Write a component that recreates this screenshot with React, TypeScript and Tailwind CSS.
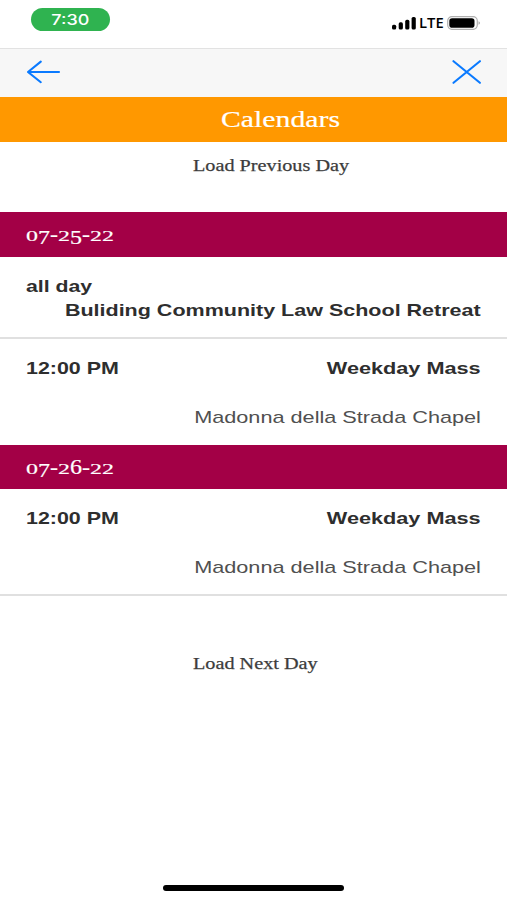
import { clsx } from "clsx";

type CalendarEvent = {
  time: string;
  title: string;
  location?: string;
};

const weekdayMass: CalendarEvent = {
  time: "12:00 PM",
  title: "Weekday Mass",
  location: "Madonna della Strada Chapel",
};

function StatusBar() {
  return (
    <div className="flex h-12 items-start justify-between bg-white pl-[31px] pr-[26px]">
      <div className="mt-2 flex h-[23px] w-[79px] items-center justify-center rounded-full bg-[#2fb350]">
        <span className="scale-x-[1.24] pt-px font-['Inter'] text-[14.5px] font-medium leading-none text-white">
          7:30
        </span>
      </div>
      <div className="mt-[15px] flex h-4 items-center">
        <svg width="25" height="14" viewBox="0 0 25 14" fill="#000">
          <rect x="0" y="8.7" width="4.2" height="4.8" rx="1.6" />
          <rect x="6.7" y="6.3" width="4.2" height="7.2" rx="1.6" />
          <rect x="13.2" y="3.8" width="4.2" height="9.7" rx="1.6" />
          <rect x="19.6" y="1" width="4.2" height="12.5" rx="1.6" />
        </svg>
        <span className="ml-[2px] w-[26px] origin-left scale-x-[1.02] pt-px font-['Open_Sans'] text-[14.5px] font-semibold leading-none text-black">
          LTE
        </span>
        <svg className="ml-[2px]" width="34" height="14" viewBox="0 0 34 14">
          <rect x="0.7" y="0.7" width="29.6" height="12.6" rx="4.2" fill="none" stroke="#b0b0b0" strokeWidth="1.2" />
          <rect x="2.3" y="2.3" width="25.2" height="9.4" rx="2.8" fill="#000" />
          <path d="M31.6 5.2c1.6.6 1.6 3 0 3.6z" fill="#999" />
        </svg>
      </div>
    </div>
  );
}

function NavBar() {
  return (
    <nav className="flex h-[49px] items-center justify-between border-t border-[#e2e2e2] bg-[#f7f7f7] pb-[2px] pl-[26px] pr-[25px] text-[#0a7aff]">
      <button aria-label="Back">
        <svg width="35" height="24" viewBox="0 0 35 24" fill="none" stroke="currentColor" strokeWidth="2.1" strokeLinecap="round" strokeLinejoin="round">
          <path d="M33 12H2M14.8 1.6 2 12l12.8 10.2" />
        </svg>
      </button>
      <button aria-label="Close">
        <svg width="30" height="24" viewBox="0 0 30 24" fill="none" stroke="currentColor" strokeWidth="2.1" strokeLinecap="round">
          <path d="M1.5 1.2 27.9 22.8M27.9 1.2 1.5 22.8" />
        </svg>
      </button>
    </nav>
  );
}

// Old-style figures: 0-2 sit at x-height, 3-5, 7 and 9 hang below the baseline.
function OldStyleDate({ value }: { value: string }) {
  return (
    <span className="inline-block origin-left scale-x-[1.2] font-['Liberation_Serif',serif] text-[20px] leading-6 text-white [-webkit-text-stroke:0.2px_white]">
      {value.split("").map((char, i) => (
        <span
          key={i}
          className={clsx(
            "inline-block origin-[50%_78%]",
            "012".includes(char) && "scale-y-[0.76]",
            "34579".includes(char) && "translate-y-[3.5px] scale-y-[0.96]"
          )}
        >
          {char}
        </span>
      ))}
    </span>
  );
}

function DayHeader({ date }: { date: string }) {
  return (
    <h2 className="flex h-[44.5px] items-center bg-[#a30046] px-[26px]">
      <OldStyleDate value={date} />
    </h2>
  );
}

function EventRow({ event, className }: { event: CalendarEvent; className?: string }) {
  return (
    <div
      className={clsx(
        "px-[26px] font-['Liberation_Sans',sans-serif] text-[17px] leading-6 text-[#2e2e2e]",
        className
      )}
    >
      <div className="flex justify-between font-bold">
        <span className="origin-left scale-x-[1.26]">{event.time}</span>
        <span className="origin-right scale-x-[1.275]">{event.title}</span>
      </div>
      {event.location && (
        <p className="mt-[25px] flex justify-end text-[#505050]">
          <span className="origin-right scale-x-[1.275]">{event.location}</span>
        </p>
      )}
    </div>
  );
}

function LoadButton({ label, className }: { label: string; className?: string }) {
  return (
    <button
      className={clsx(
        "block w-full pl-[193px] text-left font-['Liberation_Serif',serif] text-[17.5px] leading-6 text-[#3c3c3c] [-webkit-text-stroke:0.25px_#3c3c3c]",
        className
      )}
    >
      <span className="inline-block origin-left scale-x-[1.155]">{label}</span>
    </button>
  );
}

export default function App() {
  return (
    <div className="flex h-[900px] w-[507px] flex-col overflow-hidden bg-white">
      <StatusBar />
      <NavBar />
      <h1 className="flex h-[44.5px] items-center bg-[#ff9800] pl-[221px] font-['Liberation_Serif',serif] text-[24px] text-white [-webkit-text-stroke:0.2px_white]">
        <span className="origin-left scale-x-[1.24]">Calendars</span>
      </h1>
      <LoadButton label="Load Previous Day" className="h-[70.5px] pb-[24px]" />

      <DayHeader date="07-25-22" />
      <div className="h-[82.5px] border-b-2 border-[#e0e0e0] px-[26px] pt-[18px] font-['Liberation_Sans',sans-serif] text-[17px] font-bold leading-[24.5px] text-[#2e2e2e]">
        <p>
          <span className="inline-block origin-left scale-x-[1.25]">all day</span>
        </p>
        <p className="text-right">
          <span className="inline-block origin-right scale-x-[1.265]">
            Buliding Community Law School Retreat
          </span>
        </p>
      </div>
      <EventRow event={weekdayMass} className="h-[105.5px] pt-[18px]" />

      <DayHeader date="07-26-22" />
      <EventRow event={weekdayMass} className="h-[107px] border-b-2 border-[#e0e0e0] pt-[18px]" />
      <LoadButton label="Load Next Day" className="mt-[55px]" />

      <div className="mx-auto mb-[9px] mt-auto h-[6px] w-[181px] rounded-full bg-black" />
    </div>
  );
}
